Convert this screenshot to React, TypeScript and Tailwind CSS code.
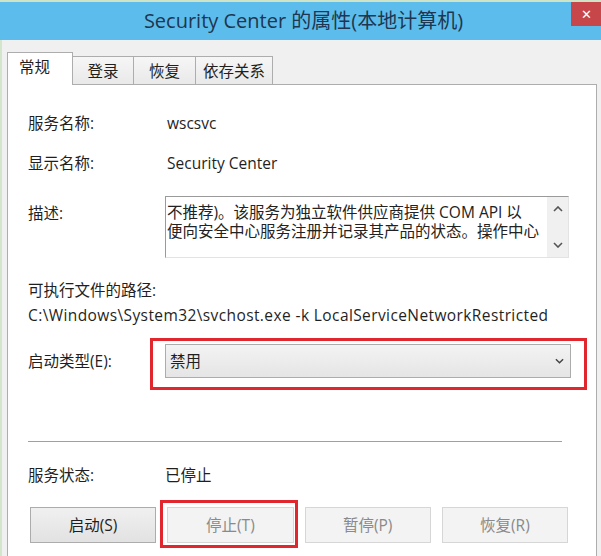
import React from "react";

function Chevron({ up = false, className = "" }: { up?: boolean; className?: string }) {
  return (
    <svg viewBox="0 0 10 6" className={className} fill="none" stroke="currentColor" strokeWidth="1.6">
      {up ? <path d="M1 5 L5 1 L9 5" /> : <path d="M1 1 L5 5 L9 1" />}
    </svg>
  );
}

const tabs = [
  { label: "登录", w: "w-[61px]" },
  { label: "恢复", w: "w-[62px]" },
  { label: "依存关系", w: "w-[77px]" },
];

const buttons = [
  { label: "启动(S)", enabled: true },
  { label: "停止(T)", enabled: false, marked: true },
  { label: "暂停(P)", enabled: false },
  { label: "恢复(R)", enabled: false },
];

export default function App() {
  return (
    <div className="relative w-[601px] h-[556px] overflow-hidden bg-[#f0f0f0] border-t-2 border-[#cfe3c6] font-['Open_Sans','Noto_Sans_CJK_SC',sans-serif] text-[15.5px] text-[#1f1f1f]">
      {/* Title bar */}
      <div className="relative h-[38px] bg-[#5cbdec] flex items-center justify-center">
        <span className="text-[20px] text-[#1e3650] pl-[6px]">Security Center 的属性(本地计算机)</span>
        <div className="absolute right-0 top-0 w-[30px] h-[24px] bg-[#c7464a] flex items-center justify-center text-white text-[13px] leading-none">
          ✕
        </div>
      </div>

      <div className="h-full border-l-2 border-[#d3e6cb] pl-[5px] pt-[12px]">
        {/* Tabs */}
        <div className="flex items-end h-[32px]">
          <div className="relative z-10 -mb-px w-[66px] h-[33px] bg-white border border-b-0 border-[#adadad] pl-[11px] pt-[4px] leading-[20px]">
            常规
          </div>
          {tabs.map((t) => (
            <div
              key={t.label}
              className={`${t.w} h-[28px] bg-gradient-to-b from-[#f6f6f6] to-[#e9e9e9] border border-l-0 border-b-0 border-[#adadad] flex items-center justify-center leading-[20px]`}
            >
              {t.label}
            </div>
          ))}
        </div>

        {/* Panel */}
        <div className="mr-[4px] h-[520px] bg-white border border-[#adadad] pl-[20px] pt-[28px] leading-[20px]">
          <div className="flex">
            <div className="w-[139px]">服务名称:</div>
            <div>wscsvc</div>
          </div>
          <div className="flex mt-[20px]">
            <div className="w-[139px]">显示名称:</div>
            <div>Security Center</div>
          </div>

          <div className="flex mt-[23px]">
            <div className="w-[137px] pt-[7px]">描述:</div>
            <div className="w-[404px] h-[62px] flex border-t border-l border-[#9a9a9a] border-r border-b border-r-[#e3e3e3] border-b-[#e3e3e3]">
              <div className="flex-1 pl-[1px] pt-[6px] leading-[19px] text-[#222]">
                <div>不推荐)。该服务为独立软件供应商提供 COM API 以</div>
                <div>便向安全中心服务注册并记录其产品的状态。操作中心</div>
              </div>
              <div className="w-[21px] bg-[#f0f0f0] flex flex-col items-center justify-between py-[9px] text-[#555]">
                <Chevron up className="w-[10px] h-[6px]" />
                <Chevron className="w-[10px] h-[6px]" />
              </div>
            </div>
          </div>

          <div className="mt-[22px]">可执行文件的路径:</div>
          <div className="mt-[5px] tracking-[0.4px]">C:\Windows\System32\svchost.exe -k LocalServiceNetworkRestricted</div>

          <div className="flex items-center mt-[19px]">
            <div className="w-[137px]">启动类型(E):</div>
            <div className="relative w-[406px] h-[34px] border border-[#acacac] bg-gradient-to-b from-[#f3f3f3] to-[#e5e5e5] flex items-center justify-between pl-[4px] pr-[6px]">
              <span>禁用</span>
              <Chevron className="w-[9px] h-[6px] text-[#444]" />
              <div className="absolute -left-[16px] -right-[17px] -top-[7px] -bottom-[13px] border-[3px] border-[#e1262d]" />
            </div>
          </div>

          <div className="mt-[63px] w-[534px] h-px bg-[#a0a0a0]" />

          <div className="flex mt-[23px]">
            <div className="w-[137px]">服务状态:</div>
            <div>已停止</div>
          </div>

          <div className="grid grid-cols-4 gap-[11px] w-[538px] ml-[2px] mt-[22px]">
            {buttons.map((b) => (
              <div
                key={b.label}
                className={`relative h-[36px] flex items-center justify-center border ${
                  b.enabled
                    ? "border-[#acacac] bg-gradient-to-b from-[#f0f0f0] to-[#e2e2e2] text-[#1f1f1f]"
                    : "border-[#d6d6d6] bg-[#f3f3f3] text-[#8a8a8a]"
                }`}
              >
                {b.label}
                {b.marked && (
                  <div className="absolute -left-[8px] -right-[5px] -top-[8px] -bottom-[6px] border-[3px] border-[#e1262d]" />
                )}
              </div>
            ))}
          </div>
        </div>
      </div>
    </div>
  );
}
